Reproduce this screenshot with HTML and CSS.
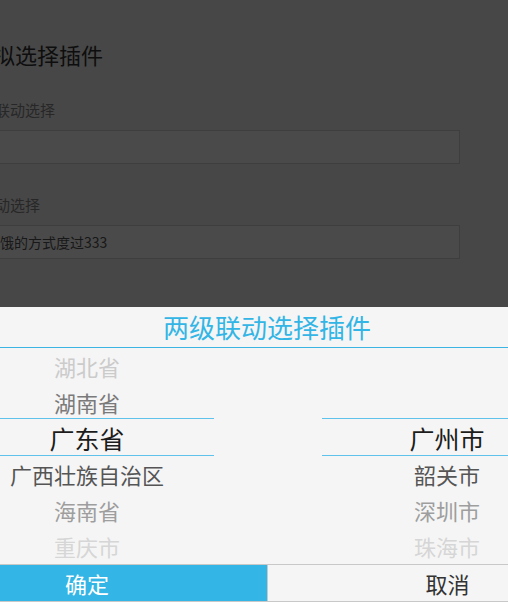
FILE: index.html
```html
<!DOCTYPE html>
<html lang="zh-CN">
<head>
<meta charset="utf-8">
<title>模拟选择插件</title>
<link rel="stylesheet" href="styles.css">
</head>
<body>
<div class="page">
  <h1 class="title">模拟选择插件</h1>
  <div class="field">
    <label class="label">二级联动选择</label>
    <div class="input"></div>
  </div>
  <div class="field">
    <label class="label">非联动选择</label>
    <div class="input">阿萨饿的方式度过333</div>
  </div>
</div>

<div class="mask"></div>

<div class="picker">
  <div class="picker-head">两级联动选择插件</div>
  <div class="wheels">
    <div class="wheel wheel-left">
      <div class="band band-left"></div>
      <div class="item d2t">湖北省</div>
      <div class="item d1">湖南省</div>
      <div class="item sel">广东省</div>
      <div class="item d1b">广西壮族自治区</div>
      <div class="item d2">海南省</div>
      <div class="item d3">重庆市</div>
    </div>
    <div class="wheel wheel-right">
      <div class="band band-right"></div>
      <div class="item sel">广州市</div>
      <div class="item d1b">韶关市</div>
      <div class="item d2">深圳市</div>
      <div class="item d3">珠海市</div>
    </div>
  </div>
  <div class="buttons">
    <div class="btn btn-ok">确定</div>
    <div class="btn btn-cancel">取消</div>
  </div>
</div>
</body>
</html>
```

FILE: styles.css
```css
html, body {
  margin: 0;
  padding: 0;
}
body {
  background: #f5f5f5;
  font-family: "Noto Sans CJK SC", "Noto Sans", sans-serif;
  overflow: hidden;
  width: 508px;
  height: 602px;
}
.page {
  margin-left: -35px;
  width: 495px;
  padding-top: 39px;
}
.title {
  margin: 0;
  padding-left: 6px;
  font-size: 22px;
  line-height: 30px;
  font-weight: normal;
  color: #333;
}
.field {
  margin-top: 31px;
}
.label {
  display: block;
  font-size: 15px;
  line-height: 20px;
  color: #888;
}
.input {
  margin-top: 10px;
  height: 32px;
  border: 1px solid #d4d4d4;
  background: #fff;
  box-sizing: content-box;
  padding: 0 6px;
  font-size: 14px;
  line-height: 32px;
  color: #555;
  white-space: nowrap;
}
.mask {
  position: fixed;
  inset: 0;
  background: rgba(0, 0, 0, 0.71);
}
.picker {
  position: fixed;
  left: -93px;
  bottom: 0;
  width: 720px;
  background: #f5f5f5;
  display: flex;
  flex-direction: column;
}
.picker-head {
  height: 40px;
  line-height: 40px;
  text-align: center;
  font-size: 26px;
  color: #33b5e5;
  border-bottom: 1px solid #3db3e3;
}
.wheels {
  display: grid;
  grid-template-columns: 1fr 1fr;
  height: 216px;
  overflow: hidden;
}
.wheel {
  position: relative;
}
.wheel-right {
  padding-top: 72px;
}
.band {
  position: absolute;
  top: 70px;
  height: 36px;
  border-top: 1px solid #5ec2ea;
  border-bottom: 1px solid #5ec2ea;
}
.band-left {
  left: 0;
  right: 53px;
}
.band-right {
  left: 55px;
  right: 0;
}
.item {
  height: 36px;
  line-height: 36px;
  text-align: center;
  font-size: 22px;
  color: #999;
  white-space: nowrap;
}
.item.sel {
  font-size: 25px;
  color: #1c1c1c;
}
.item.d1 {
  color: #7a7a7a;
}
.item.d1b {
  color: #555;
}
.item.d2 {
  color: #9e9e9e;
}
.item.d2t {
  color: #cbcbcb;
}
.item.d3 {
  color: #d6d6d6;
}
.buttons {
  display: grid;
  grid-template-columns: 1fr 1fr;
  border-top: 1px solid #c8c8c8;
  border-bottom: 1px solid #c8c8c8;
}
.btn {
  height: 36px;
  line-height: 36px;
  text-align: center;
  font-size: 22px;
}
.btn-ok {
  background: #33b5e5;
  color: #fff;
}
.btn-cancel {
  background: #f5f5f5;
  color: #333;
  border-left: 1px solid #c8c8c8;
}
```
